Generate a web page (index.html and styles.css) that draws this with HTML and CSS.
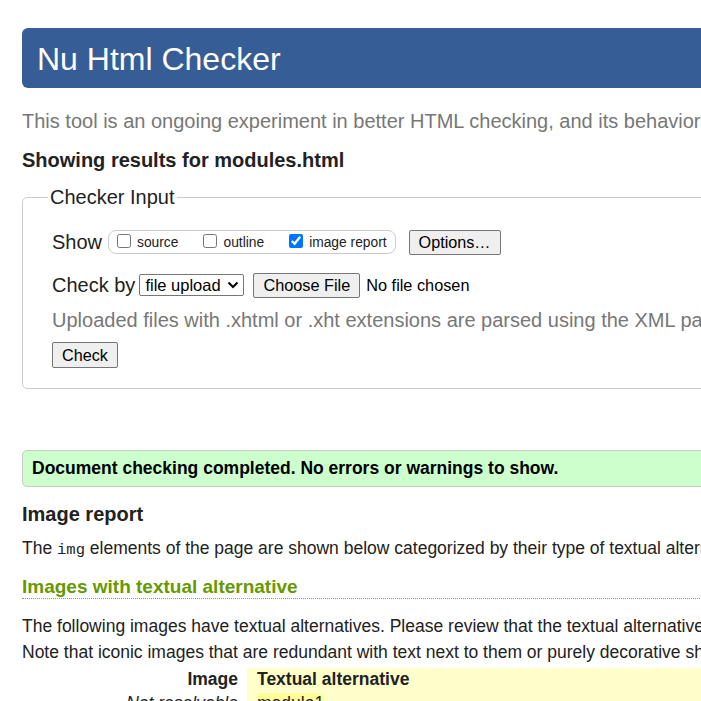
FILE: index.html
```html
<!DOCTYPE html>
<html lang="en">
<head>
<meta charset="utf-8">
<title>Showing results for modules.html - Nu Html Checker</title>
<link rel="stylesheet" href="styles.css">
</head>
<body>
<div class="page">
  <h1 class="title">Nu Html Checker</h1>
  <p class="intro">This tool is an ongoing experiment in better HTML checking, and its behavior remains subject to change</p>
  <p class="showing">Showing results for modules.html</p>
  <form class="checker">
    <fieldset class="inputs">
      <legend class="legend">Checker Input</legend>
      <div class="row row-show">
        <span class="row-label">Show</span>
        <span class="toggles">
          <label class="toggle"><input type="checkbox" class="cb"><span class="toggle-text">source</span></label>
          <label class="toggle"><input type="checkbox" class="cb"><span class="toggle-text">outline</span></label>
          <label class="toggle"><input type="checkbox" class="cb" checked><span class="toggle-text">image report</span></label>
        </span>
        <button type="button" class="btn btn-options">Options…</button>
      </div>
      <div class="row row-by">
        <span class="row-label row-label-by">Check by</span>
        <span class="select-wrap">
          <select class="select"><option>file upload</option><option>address</option><option>text input</option></select>
          <svg class="chevron" width="12" height="8" viewBox="0 0 12 8" aria-hidden="true"><path d="M1.5 1.5 L6 6 L10.5 1.5" fill="none" stroke="#000" stroke-width="2"/></svg>
        </span>
        <input type="file" class="file">
      </div>
      <p class="hint">Uploaded files with .xhtml or .xht extensions are parsed using the XML parser.</p>
      <button type="submit" class="btn btn-check">Check</button>
    </fieldset>
  </form>
  <p class="success">Document checking completed. No errors or warnings to show.</p>
  <h2 class="report-title">Image report</h2>
  <p class="report-intro">The <code class="code">img</code> elements of the page are shown below categorized by their type of textual alternative.</p>
  <h3 class="section-title">Images with textual alternative</h3>
  <p class="section-intro">The following images have textual alternatives. Please review that the textual alternatives are appropriate substitutes for the images in their context.</p>
  <p class="section-intro">Note that iconic images that are redundant with text next to them or purely decorative should have an empty textual alternative.</p>
  <table class="imgs">
    <thead>
      <tr><th class="col-img">Image</th><th class="col-alt">Textual alternative</th></tr>
    </thead>
    <tbody>
      <tr><td class="col-img unres">Not resolvable</td><td class="col-alt"><span class="alt">module1</span></td></tr>
      <tr><td class="col-img unres">Not resolvable</td><td class="col-alt"><span class="alt">module2</span></td></tr>
    </tbody>
  </table>
</div>
</body>
</html>
```

FILE: styles.css
```css
html {
  overflow: hidden;
  background: #fff;
}
body {
  margin: 0;
  font-family: "Liberation Sans", Arial, sans-serif;
  font-size: 17.5px;
  color: #222;
}
.page {
  width: 1200px;
  padding: 28px 0 0 22px;
}
.title {
  margin: 0;
  height: 60px;
  line-height: 62px;
  padding: 0 15px;
  font-size: 32px;
  font-weight: normal;
  color: #fff;
  background: #365d95;
  border-radius: 6px;
}
.intro {
  margin: 21px 0 0;
  font-size: 20px;
  line-height: 24px;
  color: #777;
  white-space: nowrap;
}
.showing {
  margin: 15px 0 0;
  font-size: 20px;
  line-height: 24px;
  font-weight: bold;
}
.checker {
  margin: 13px 0 0;
}
.inputs {
  margin: 0;
  padding: 0 0 20px 29px;
  border: 1px solid #ccc;
  border-radius: 5px;
}
.legend {
  font-size: 20px;
  line-height: 24px;
  padding: 0 2px;
  margin-left: -4px;
}
.row {
  display: flex;
  align-items: center;
}
.row-show {
  margin-top: 20px;
  height: 26px;
}
.row-label {
  font-size: 20px;
  margin-right: 6px;
}
.row-label-by {
  margin-right: 4px;
}
.toggles {
  display: flex;
  align-items: center;
  box-sizing: border-box;
  height: 24px;
  border: 1px solid #ccc;
  border-radius: 8px;
  padding: 0 8px 0 4px;
  font-size: 13.8px;
}
.toggle {
  display: inline-flex;
  align-items: center;
  margin-right: 21px;
}
.toggle:last-child {
  margin-right: 0;
}
.cb {
  width: 14px;
  height: 14px;
  margin: 0 2px 3px 4px;
}
.toggle-text {
  margin-left: 4px;
}
.btn {
  box-sizing: border-box;
  font-family: "Liberation Sans", Arial, sans-serif;
  font-size: 16.2px;
  color: #000;
  background: #efefef;
  border: 1px solid #767676;
  border-radius: 2px;
  padding: 0 9px;
}
.btn-options {
  margin-left: 13px;
  height: 25px;
}
.row-by {
  margin-top: 18px;
  height: 24px;
}
.select-wrap {
  position: relative;
  display: inline-flex;
}
.select {
  appearance: none;
  -webkit-appearance: none;
  box-sizing: border-box;
  width: 105px;
  height: 22px;
  padding: 0 0 0 5px;
  border: 1px solid #767676;
  border-radius: 2px;
  background: #fff;
  font-family: "Liberation Sans", Arial, sans-serif;
  font-size: 16.5px;
  color: #000;
}
.chevron {
  position: absolute;
  right: 5px;
  top: 7px;
  pointer-events: none;
}
.file {
  margin-left: 9px;
  font-family: "Liberation Sans", Arial, sans-serif;
  font-size: 16.3px;
  color: #000;
}
.file::file-selector-button {
  box-sizing: border-box;
  height: 25px;
  font-family: "Liberation Sans", Arial, sans-serif;
  font-size: 16.3px;
  color: #000;
  background: #efefef;
  border: 1px solid #767676;
  border-radius: 2px;
  padding: 0 9px;
  margin-right: 6px;
}
.hint {
  margin: 11px 0 0;
  font-size: 20px;
  line-height: 24px;
  color: #777;
  white-space: nowrap;
}
.btn-check {
  display: block;
  margin-top: 10px;
  height: 26px;
}
.success {
  margin: 61px 0 0;
  line-height: 35px;
  border: 1px solid #c8c8c8;
  border-radius: 5px;
  background: #ccffcc;
  padding: 0 9px;
  font-size: 17.5px;
  font-weight: bold;
  color: #000;
}
.report-title {
  margin: 15px 0 0;
  font-size: 20px;
  line-height: 24px;
}
.report-intro {
  margin: 10px 0 0;
  line-height: 24px;
  white-space: nowrap;
}
.code {
  font-family: "Liberation Mono", "DejaVu Sans Mono", monospace;
  font-size: 15.5px;
}
.section-title {
  margin: 14px 0 0;
  font-size: 19px;
  line-height: 22px;
  color: #669900;
  border-bottom: 1px dotted #999966;
}
.section-intro {
  margin: 0;
  line-height: 26px;
  white-space: nowrap;
}
.section-title + .section-intro {
  margin-top: 14px;
}
.imgs {
  margin-top: 3px;
  border-collapse: collapse;
}
.imgs th,
.imgs td {
  padding: 0;
  line-height: 22px;
}
.col-img {
  width: 216px;
  padding-right: 9px !important;
  text-align: right;
}
.col-alt {
  width: 900px;
  padding-left: 10px !important;
  text-align: left;
  background: #ffffcc;
}
.unres {
  font-style: italic;
  line-height: 26px !important;
}
.alt {
  background: #ffff99;
}
```
